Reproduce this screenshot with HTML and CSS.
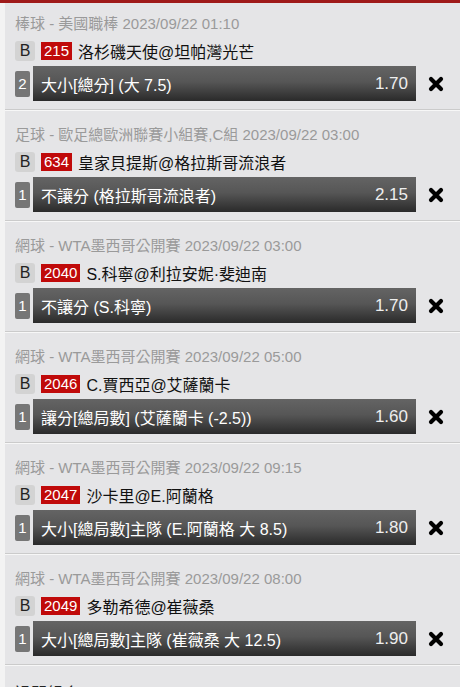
FILE: index.html
```html
<!DOCTYPE html>
<html lang="zh-Hant">
<head>
    <meta charset="UTF-8">
    <meta name="viewport" content="width=device-width, initial-scale=1.0">
    <title>注單</title>
    <link rel="stylesheet" href="styles.css">
</head>
<body>
    <div class="list">
        <div class="bet">
            <div class="league">棒球 - 美國職棒 2023/09/22 01:10</div>
            <div class="match">
                <span class="side">B</span>
                <span class="code">215</span>
                <span class="teams">洛杉磯天使@坦帕灣光芒</span>
            </div>
            <div class="pick">
                <span class="num">2</span>
                <div class="bar">
                    <span class="market">大小[總分] (大 7.5)</span>
                    <span class="odds">1.70</span>
                </div>
                <span class="remove"><svg width="16" height="16" viewBox="0 0 16 16"><path d="M3 3L13 13M13 3L3 13" stroke="#000" stroke-width="4.2" stroke-linecap="round"/></svg></span>
            </div>
        </div>

        <div class="bet">
            <div class="league">足球 - 歐足總歐洲聯賽小組賽,C組 2023/09/22 03:00</div>
            <div class="match">
                <span class="side">B</span>
                <span class="code">634</span>
                <span class="teams">皇家貝提斯@格拉斯哥流浪者</span>
            </div>
            <div class="pick">
                <span class="num">1</span>
                <div class="bar">
                    <span class="market">不讓分 (格拉斯哥流浪者)</span>
                    <span class="odds">2.15</span>
                </div>
                <span class="remove"><svg width="16" height="16" viewBox="0 0 16 16"><path d="M3 3L13 13M13 3L3 13" stroke="#000" stroke-width="4.2" stroke-linecap="round"/></svg></span>
            </div>
        </div>

        <div class="bet">
            <div class="league">網球 - WTA墨西哥公開賽 2023/09/22 03:00</div>
            <div class="match">
                <span class="side">B</span>
                <span class="code">2040</span>
                <span class="teams">S.科寧@利拉安妮·斐迪南</span>
            </div>
            <div class="pick">
                <span class="num">1</span>
                <div class="bar">
                    <span class="market">不讓分 (S.科寧)</span>
                    <span class="odds">1.70</span>
                </div>
                <span class="remove"><svg width="16" height="16" viewBox="0 0 16 16"><path d="M3 3L13 13M13 3L3 13" stroke="#000" stroke-width="4.2" stroke-linecap="round"/></svg></span>
            </div>
        </div>

        <div class="bet">
            <div class="league">網球 - WTA墨西哥公開賽 2023/09/22 05:00</div>
            <div class="match">
                <span class="side">B</span>
                <span class="code">2046</span>
                <span class="teams">C.賈西亞@艾薩蘭卡</span>
            </div>
            <div class="pick">
                <span class="num">1</span>
                <div class="bar">
                    <span class="market">讓分[總局數] (艾薩蘭卡 (-2.5))</span>
                    <span class="odds">1.60</span>
                </div>
                <span class="remove"><svg width="16" height="16" viewBox="0 0 16 16"><path d="M3 3L13 13M13 3L3 13" stroke="#000" stroke-width="4.2" stroke-linecap="round"/></svg></span>
            </div>
        </div>

        <div class="bet">
            <div class="league">網球 - WTA墨西哥公開賽 2023/09/22 09:15</div>
            <div class="match">
                <span class="side">B</span>
                <span class="code">2047</span>
                <span class="teams">沙卡里@E.阿蘭格</span>
            </div>
            <div class="pick">
                <span class="num">1</span>
                <div class="bar">
                    <span class="market">大小[總局數]主隊 (E.阿蘭格 大 8.5)</span>
                    <span class="odds">1.80</span>
                </div>
                <span class="remove"><svg width="16" height="16" viewBox="0 0 16 16"><path d="M3 3L13 13M13 3L3 13" stroke="#000" stroke-width="4.2" stroke-linecap="round"/></svg></span>
            </div>
        </div>

        <div class="bet">
            <div class="league">網球 - WTA墨西哥公開賽 2023/09/22 08:00</div>
            <div class="match">
                <span class="side">B</span>
                <span class="code">2049</span>
                <span class="teams">多勒希德@崔薇桑</span>
            </div>
            <div class="pick">
                <span class="num">1</span>
                <div class="bar">
                    <span class="market">大小[總局數]主隊 (崔薇桑 大 12.5)</span>
                    <span class="odds">1.90</span>
                </div>
                <span class="remove"><svg width="16" height="16" viewBox="0 0 16 16"><path d="M3 3L13 13M13 3L3 13" stroke="#000" stroke-width="4.2" stroke-linecap="round"/></svg></span>
            </div>
        </div>

        <div class="combo">過關組合</div>
    </div>
</body>
</html>
```

FILE: styles.css
```css
body {
    margin: 0;
    padding: 0;
    background-color: #f3f3f3;
    border-top: 3px solid #9f1a1a;
    font-family: "Liberation Sans", "Noto Sans CJK TC", sans-serif;
    overflow: hidden;
}
.list {
    margin-left: 5px;
    background-color: #e5e5e7;
}
.bet {
    padding: 14px 4px 0 10px;
    height: 111px;
    box-sizing: border-box;
    border-bottom: 1px solid #f7f7f7;
    box-shadow: inset 0 -1px 0 #cbcbcb;
}
.bet:first-child {
    padding-top: 11px;
    height: 108px;
}
.league {
    height: 20px;
    line-height: 20px;
    font-size: 15px;
    color: #9a9a9a;
    white-space: nowrap;
}
.match {
    display: flex;
    align-items: center;
    height: 22px;
    margin-top: 6px;
}
.side {
    width: 20px;
    height: 20px;
    line-height: 20px;
    text-align: center;
    background-color: #d3d3d3;
    border-radius: 3px;
    font-size: 16px;
    color: #222;
}
.code {
    margin-left: 6px;
    padding: 0 3px;
    height: 18px;
    line-height: 18px;
    background-color: #c00a0a;
    color: #fff;
    font-size: 15px;
}
.teams {
    margin-left: 6px;
    font-size: 16px;
    color: #111;
}
.pick {
    display: flex;
    align-items: center;
    margin-top: 4px;
}
.num {
    width: 15px;
    height: 26px;
    line-height: 26px;
    text-align: center;
    background-color: #767676;
    border-radius: 2px;
    color: #fff;
    font-size: 15px;
}
.bar {
    flex: 1;
    margin-left: 3px;
    height: 35px;
    display: flex;
    align-items: center;
    justify-content: space-between;
    padding: 0 8px;
    background: linear-gradient(#646464 0%, #565656 45%, #2a2a2a 100%);
    color: #fff;
}
.market {
    font-size: 16px;
    white-space: nowrap;
}
.odds {
    font-size: 17px;
    color: #eee;
}
.remove {
    width: 40px;
    display: flex;
    justify-content: center;
    align-items: center;
}
.combo {
    padding: 14px 0 0 10px;
    font-size: 16px;
    color: #222;
}
```
